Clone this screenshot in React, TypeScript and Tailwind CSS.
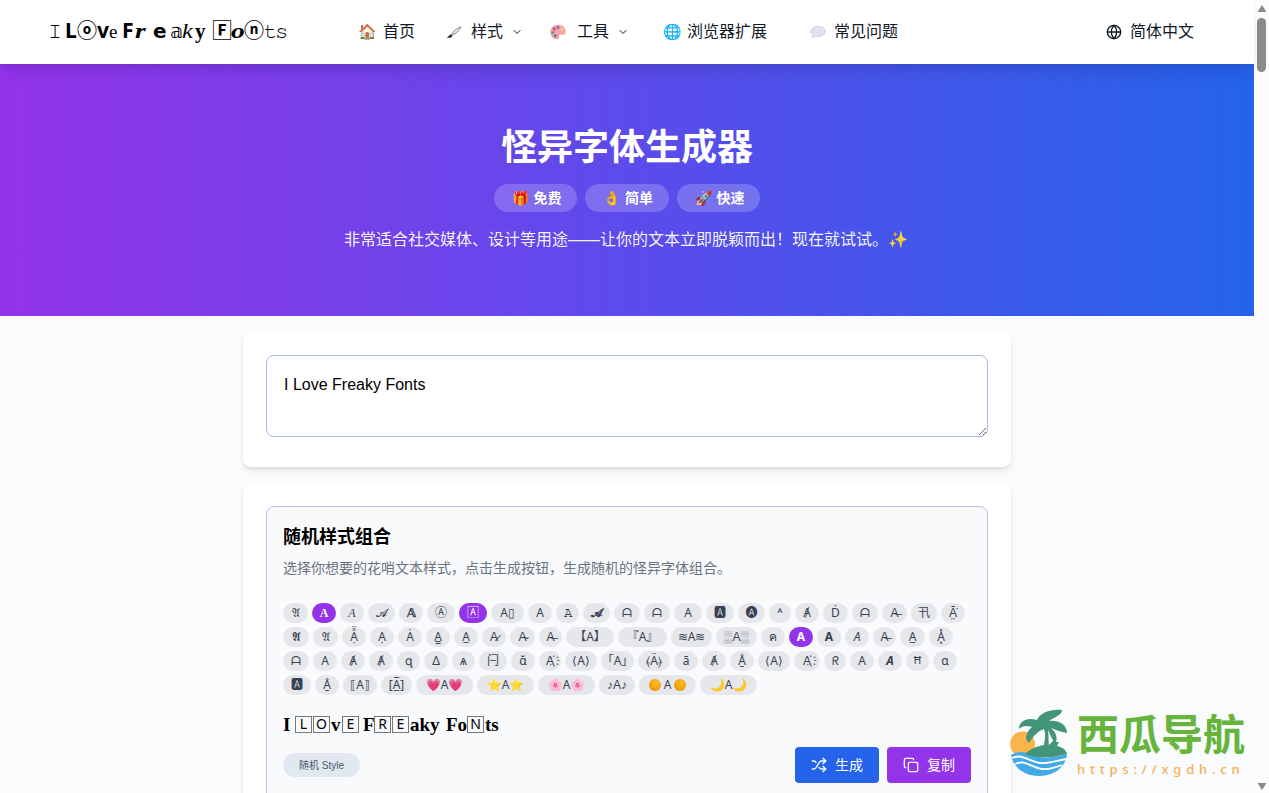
import React from 'react';
import { ChevronDown, Copy, Globe, Shuffle } from 'lucide-react';

interface Glyph {
  char: string;
  width: number;
  className?: string;
}

interface Chip {
  label: React.ReactNode;
  width: number;
  active?: boolean;
  className?: string;
}

const SERIF = "font-['Liberation_Serif',serif]";
const SERIF_BOLD = "font-['Liberation_Serif',serif] font-bold";
const SERIF_SCRIPT = "font-['Liberation_Serif',serif] font-bold italic text-[22px] origin-left scale-x-125";
const SANS_BOLD = "font-['Noto_Sans',sans-serif] font-bold text-[21px]";
const MARKED = "font-['Liberation_Sans',sans-serif]";
const SHADE = "font-['Liberation_Sans','DejaVu_Sans',sans-serif]";

const LOGO: Glyph[] = [
  { char: '𝙸', width: 17 },
  { char: 'L', width: 12, className: SANS_BOLD },
  { char: 'ⓞ', width: 20, className: 'font-bold' },
  { char: 'v', width: 12, className: SANS_BOLD },
  { char: 'e', width: 13, className: SERIF + ' text-[19px]' },
  { char: 'F', width: 13, className: SANS_BOLD },
  { char: 'r', width: 18, className: SERIF_SCRIPT },
  { char: 'e', width: 17, className: "font-['DejaVu_Sans',sans-serif] font-bold" },
  { char: '𝕒', width: 12 },
  { char: 'k', width: 13, className: SERIF + ' italic text-[22px] origin-left scale-x-110' },
  { char: 'y', width: 17, className: SERIF_BOLD + ' text-[21px]' },
  { char: '🄵', width: 19, className: 'font-bold' },
  { char: 'o', width: 13, className: SERIF_SCRIPT },
  { char: 'ⓝ', width: 20, className: 'font-bold' },
  { char: '𝚝', width: 11, className: 'text-[19px]' },
  { char: '𝚜', width: 11, className: 'text-[19px]' },
];

const Sun = () => (
  <span className="w-3 h-3 mx-px rounded-full bg-[radial-gradient(circle_at_60%_35%,#fbbf24,#f59e0b_60%,#d97706)]" />
);

const CHIP_ROWS: Chip[][] = [
  [
    { label: '𝔄', width: 25 },
    { label: 'A', width: 24, active: true, className: SERIF_BOLD },
    { label: 'A', width: 24, className: SERIF + ' italic' },
    { label: '𝓐', width: 27 },
    { label: '𝔸', width: 24, className: 'font-bold' },
    { label: 'Ⓐ', width: 28 },
    { label: '🄰', width: 28, active: true },
    { label: 'A▯', width: 33 },
    { label: 'A', width: 24 },
    { label: '𝙰', width: 23 },
    { label: '𝓐', width: 27, className: 'font-bold' },
    { label: 'ᗩ', width: 26 },
    { label: 'ᗩ', width: 26 },
    { label: 'A', width: 28 },
    { label: '🅰', width: 28 },
    { label: '🅐', width: 27 },
    { label: 'ᴬ', width: 22 },
    { label: 'Ⱥ', width: 24 },
    { label: 'Ḋ', width: 25 },
    { label: 'ᗩ', width: 26 },
    { label: 'A̶', width: 25, className: MARKED },
    { label: '卂', width: 26 },
    { label: 'Ã̤̇', width: 24, className: MARKED },
  ],
  [
    { label: '𝕬', width: 26 },
    { label: '𝔄', width: 25 },
    { label: 'Ạ̊̈', width: 24 },
    { label: 'Ạ', width: 24 },
    { label: 'Ȧ', width: 24 },
    { label: 'A̳', width: 24 },
    { label: 'A̲', width: 24 },
    { label: 'A̷', width: 24, className: MARKED },
    { label: 'A̴', width: 25, className: MARKED },
    { label: 'A̶', width: 23, className: MARKED },
    { label: '【A】', width: 48 },
    { label: '『A』', width: 49 },
    { label: '≋A≋', width: 41 },
    { label: '░A░', width: 41, className: SHADE },
    { label: 'ค', width: 24 },
    { label: 'A', width: 24, active: true, className: 'font-bold' },
    { label: 'A', width: 24, className: 'font-bold' },
    { label: 'A', width: 24, className: 'italic' },
    { label: 'A̶', width: 23, className: MARKED },
    { label: 'A̲', width: 25 },
    { label: 'A͓̽', width: 24 },
  ],
  [
    { label: 'ᗩ', width: 26 },
    { label: 'A', width: 24 },
    { label: 'Ⱥ', width: 24 },
    { label: 'Ⱥ', width: 24 },
    { label: 'զ', width: 23 },
    { label: 'Δ', width: 24 },
    { label: 'ѧ', width: 23 },
    { label: '闩', width: 28 },
    { label: 'ᾰ', width: 24 },
    { label: 'A҉', width: 22, className: MARKED },
    { label: '⟨A⟩', width: 32 },
    { label: '｢A｣', width: 33 },
    { label: '⦑Ä⦒', width: 32 },
    { label: 'ā', width: 24 },
    { label: 'Ⱥ', width: 24 },
    { label: 'Å̱', width: 24 },
    { label: '⟨A⟩', width: 32 },
    { label: 'A҉', width: 26, className: MARKED },
    { label: 'ᖇ', width: 22 },
    { label: 'A', width: 24 },
    { label: 'A', width: 24, className: 'font-bold italic' },
    { label: 'Ħ', width: 23, className: 'text-[10px]' },
    { label: 'ɑ', width: 24 },
  ],
  [
    { label: '🅰', width: 28 },
    { label: 'Å̱', width: 24 },
    { label: '⟦A⟧', width: 34 },
    { label: '[A̲̅]', width: 31 },
    { label: '💗A💗', width: 57 },
    { label: '⭐A⭐', width: 57 },
    { label: '🌸A🌸', width: 57 },
    { label: '♪A♪', width: 36, className: SHADE },
    { label: <><Sun />A<Sun /></>, width: 57, className: 'gap-0.5' },
    { label: '🌙A🌙', width: 57 },
  ],
];

const RESULT: Glyph[] = [
  { char: 'I', width: 12 },
  { char: 'L', width: 18, className: 'box' },
  { char: 'O', width: 18, className: 'box' },
  { char: 'v', width: 11 },
  { char: 'E', width: 21, className: 'box' },
  { char: 'F', width: 11 },
  { char: 'R', width: 18, className: 'box' },
  { char: 'E', width: 18, className: 'box' },
  { char: 'aky', width: 36 },
  { char: 'Fo', width: 21 },
  { char: 'N', width: 18, className: 'box' },
  { char: 'ts', width: 16 },
];

const BrushIcon = () => (
  <svg viewBox="0 0 16 16" className="w-4 h-4">
    <path d="M15 3C11.500 4 8.500 6 6.500 9l1.500 1.500C11 8.500 13.500 6 15 3z" fill="#e5e7eb" stroke="#6b7280" strokeWidth=".8" />
    <path d="M6.500 9L8 10.500l-2 1.500L4.800 10.800z" fill="#9ca3af" />
    <path d="M5 10.200l1.600 1.700C5.500 13.800 3 14 .5 13.500 2.500 13 3 10.800 5 10.200z" fill="#262626" />
  </svg>
);

const PaletteIcon = () => (
  <svg viewBox="0 0 16 16" className="w-4 h-4 ml-px">
    <path d="M8 .8C3.500.8.2 4 .2 8.200c0 4 3 7 6.800 7 2 0 2.500-1 2.200-2.300-.4-1.700.8-2.600 2.500-2.200 2.300.5 4.100-.8 4.100-3.300C15.800 3.500 12.300.8 8 .8z" fill="#f6a5a0" />
    <circle cx="8" cy="3.600" r="1.500" fill="#8b5fc7" />
    <circle cx="4.200" cy="5" r="1.400" fill="#c2408c" />
    <circle cx="2.800" cy="8.600" r="1.400" fill="#3f9b8f" />
    <circle cx="5.200" cy="11.800" r="1.500" fill="#4a78c9" />
    <circle cx="12" cy="5.200" r="1.500" fill="#f9cf9c" />
  </svg>
);

const BubbleIcon = () => (
  <svg viewBox="0 0 16 16" className="w-4 h-4">
    <path d="M8.200 2.500C4 2.500 1 4.600 1 7.400c0 1.600.8 3 2 3.800L2.400 13.500l3.200-1.300c.8.200 1.700.3 2.600.3 4.200 0 7.200-2.300 7.200-5.100S12.400 2.500 8.200 2.500z" fill="#e2e1f0" stroke="#bdbbd3" strokeWidth=".6" />
  </svg>
);

const NAV = [
  { icon: '🏠', label: '首页', iconWidth: 25, gap: 'mr-[31px]' },
  { icon: <BrushIcon />, label: '样式', iconWidth: 25, gap: 'mr-[26px]', menu: true },
  { icon: <PaletteIcon />, label: '工具', iconWidth: 28, gap: 'mr-[34px]', menu: true },
  { icon: '🌐', label: '浏览器扩展', iconWidth: 24, gap: 'mr-[43px]' },
  { icon: <BubbleIcon />, label: '常见问题', iconWidth: 24, gap: '' },
];

const BADGES = [
  { icon: '🎁', label: '免费' },
  { icon: '👌', label: '简单' },
  { icon: '🚀', label: '快速' },
];

const Header: React.FC = () => (
  <header className="relative z-10 h-16 shrink-0 bg-white shadow-lg flex items-center pl-[48px] pr-[60px]">
    <div className="w-[310px] h-10 flex items-baseline text-[20px] leading-[36px]">
      {LOGO.map((g, i) => (
        <span key={i} className={`whitespace-nowrap ${g.className ?? ''}`} style={{ width: g.width }}>
          {g.char}
        </span>
      ))}
    </div>
    <nav className="flex items-center text-gray-900">
      {NAV.map((item) => (
        <div key={item.label} className={`flex items-center whitespace-nowrap ${item.gap}`}>
          <span className="text-[15px]" style={{ width: item.iconWidth }}>{item.icon}</span>
          <span>{item.label}</span>
          {item.menu && <ChevronDown className="w-3 h-3 ml-2" />}
        </div>
      ))}
    </nav>
    <div className="ml-auto flex items-center gap-2 text-gray-900">
      <Globe className="w-4 h-4" />
      <span>简体中文</span>
    </div>
  </header>
);

const Hero: React.FC = () => (
  <section className="h-[252px] shrink-0 bg-[linear-gradient(to_right,#9333ea,#2563eb)] text-white flex flex-col items-center pt-[61px]">
    <h1 className="text-[36px] leading-[45px] font-bold">怪异字体生成器</h1>
    <div className="flex gap-2 mt-[14px]">
      {BADGES.map((b) => (
        <span key={b.label} className="h-7 w-[83.5px] rounded-full bg-white/20 flex items-center justify-center gap-1 pl-0.5 text-sm font-bold">
          <span className="w-[18px]">{b.icon}</span>
          {b.label}
        </span>
      ))}
    </div>
    <p className="mt-4 pr-0.5 text-base text-white/95">
      非常适合社交媒体、设计等用途——让你的文本立即脱颖而出！现在就试试。✨
    </p>
  </section>
);

const StyleChip: React.FC<Chip> = ({ label, width, active, className }) => (
  <span
    className={`h-5 shrink-0 rounded-full flex items-center justify-center whitespace-nowrap text-xs ${
      active ? 'bg-[#9333ea] text-white' : 'bg-[#e5e7eb] text-[#374151]'
    } ${className ?? ''}`}
    style={{ width }}
  >
    {label}
  </span>
);

const Watermark: React.FC = () => (
  <div className="absolute left-[1010px] top-[708px] flex">
    <svg viewBox="0 0 60 70" className="w-[60px] h-[70px]">
      <circle cx="12.500" cy="36" r="12.500" fill="#f9b54a" />
      <path d="M1 47C9 42 15 44 23 47C34 52 45 49 57 46C56 59 44 68 29 68C14 68 3 59 1 47Z" fill="#42a9e6" />
      <path d="M2 50C12 45 20 54 30 55C40 56 48 52 57 51M5 56C15 51 22 60 32 61C40 62 46 59 52 57" fill="none" stroke="#fff" strokeWidth="1.800" />
      <path d="M15 46C20 41 27 38 34 37C35 31 36 27 34 21C28 23 23 28 19 35C14 31 16 24 22 19C17 17 12 18 9 21C9 13 17 9 27 12C30 5 40 1 52 2C52 7 43 10 39 13C49 12 57 17 57 25C51 24 46 22 41 20C47 25 48 32 45 36C42 31 40 26 38 22C39 28 38 33 39 37L45 31L46 34H49L47 38C51 39 56 41 57 46C44 49 32 52 15 46Z" fill="#43957a" />
    </svg>
    <div className="ml-[7px] pt-0.5">
      <div className="text-[42px] leading-[51px] font-bold text-[#67b43d]">西瓜导航</div>
      <div className="font-['Noto_Sans'] text-[13px] leading-4 font-medium tracking-[4.8px] text-[#f9ad55]">https://xgdh.cn</div>
    </div>
  </div>
);

const Scrollbar: React.FC = () => (
  <div className="w-[15px] h-full shrink-0 bg-[#fcfcfc] flex flex-col items-center pt-[5px] pb-[3px]">
    <svg viewBox="0 0 10 8" className="w-2.5 h-2"><path d="M5 0L9.5 7H.5Z" fill="#8b8b8b" /></svg>
    <div className="w-[9px] h-[54px] mt-[5px] rounded-full bg-[#8b8b8b]" />
    <svg viewBox="0 0 10 8" className="w-2.5 h-2 mt-auto"><path d="M5 8L9.500 1H.5Z" fill="#8b8b8b" /></svg>
  </div>
);

const App: React.FC = () => {
  return (
    <div className="relative w-[1269px] h-[793px] overflow-hidden flex bg-white text-black font-['Liberation_Sans','Noto_Sans_CJK_SC',sans-serif]">
      <div className="flex-1 flex flex-col min-w-0 bg-[#f9fbfc]">
        <Header />
        <Hero />
        <main className="w-[768px] ml-[243px] pt-4 flex flex-col gap-4">
          <section className="h-[135px] rounded-lg bg-white shadow-md px-[23px] pt-[23px]">
            <textarea
              defaultValue="I Love Freaky Fonts"
              className="block w-[722px] h-[82px] rounded-lg border border-[#a5b8ec] bg-white px-[17px] py-[17px] text-base outline-none"
            />
          </section>
          <section className="h-[330px] rounded-lg bg-white shadow-md p-[23px]">
            <div className="h-[330px] rounded-lg border border-[#c5b7ec] bg-[#f9fafc] px-4 pt-[18px]">
              <h2 className="text-lg leading-[25px] font-bold">随机样式组合</h2>
              <p className="mt-[8px] text-sm leading-5 text-[#6b7280]">
                选择你想要的花哨文本样式，点击生成按钮，生成随机的怪异字体组合。
              </p>
              <div className="mt-[25px] flex flex-col gap-1 font-['Noto_Sans','Noto_Sans_CJK_SC',sans-serif]">
                {CHIP_ROWS.map((row, i) => (
                  <div key={i} className="flex gap-1">
                    {row.map((chip, j) => (
                      <StyleChip key={j} {...chip} />
                    ))}
                  </div>
                ))}
              </div>
              <div className="mt-4 h-7 flex items-center text-[19px] leading-7 font-bold font-['Liberation_Serif',serif]">
                {RESULT.map((g, i) => (
                  <span key={i} className="shrink-0" style={{ width: g.width }}>
                    {g.className === 'box' ? (
                      <span className="flex w-[17px] h-[17px] mb-0.5 border border-[#777] items-center justify-center text-[14px] leading-none font-normal font-['Noto_Sans',sans-serif]">
                        {g.char}
                      </span>
                    ) : (
                      g.char
                    )}
                  </span>
                ))}
              </div>
              <div className="mt-2 flex items-center">
                <span className="h-6 px-4 rounded-full bg-[#e2e8f0] text-[10px] text-[#475569] flex items-center">随机 Style</span>
                <button className="ml-auto w-[84px] h-9 rounded bg-[#2563eb] text-white text-sm flex items-center justify-center gap-2">
                  <Shuffle className="w-4 h-4" strokeWidth={2} />
                  生成
                </button>
                <button className="ml-2 w-[84px] h-9 rounded bg-[#9333ea] text-white text-sm flex items-center justify-center gap-2">
                  <Copy className="w-4 h-4" strokeWidth={2} />
                  复制
                </button>
              </div>
            </div>
          </section>
        </main>
      </div>
      <Scrollbar />
      <Watermark />
    </div>
  );
};

export default App;
